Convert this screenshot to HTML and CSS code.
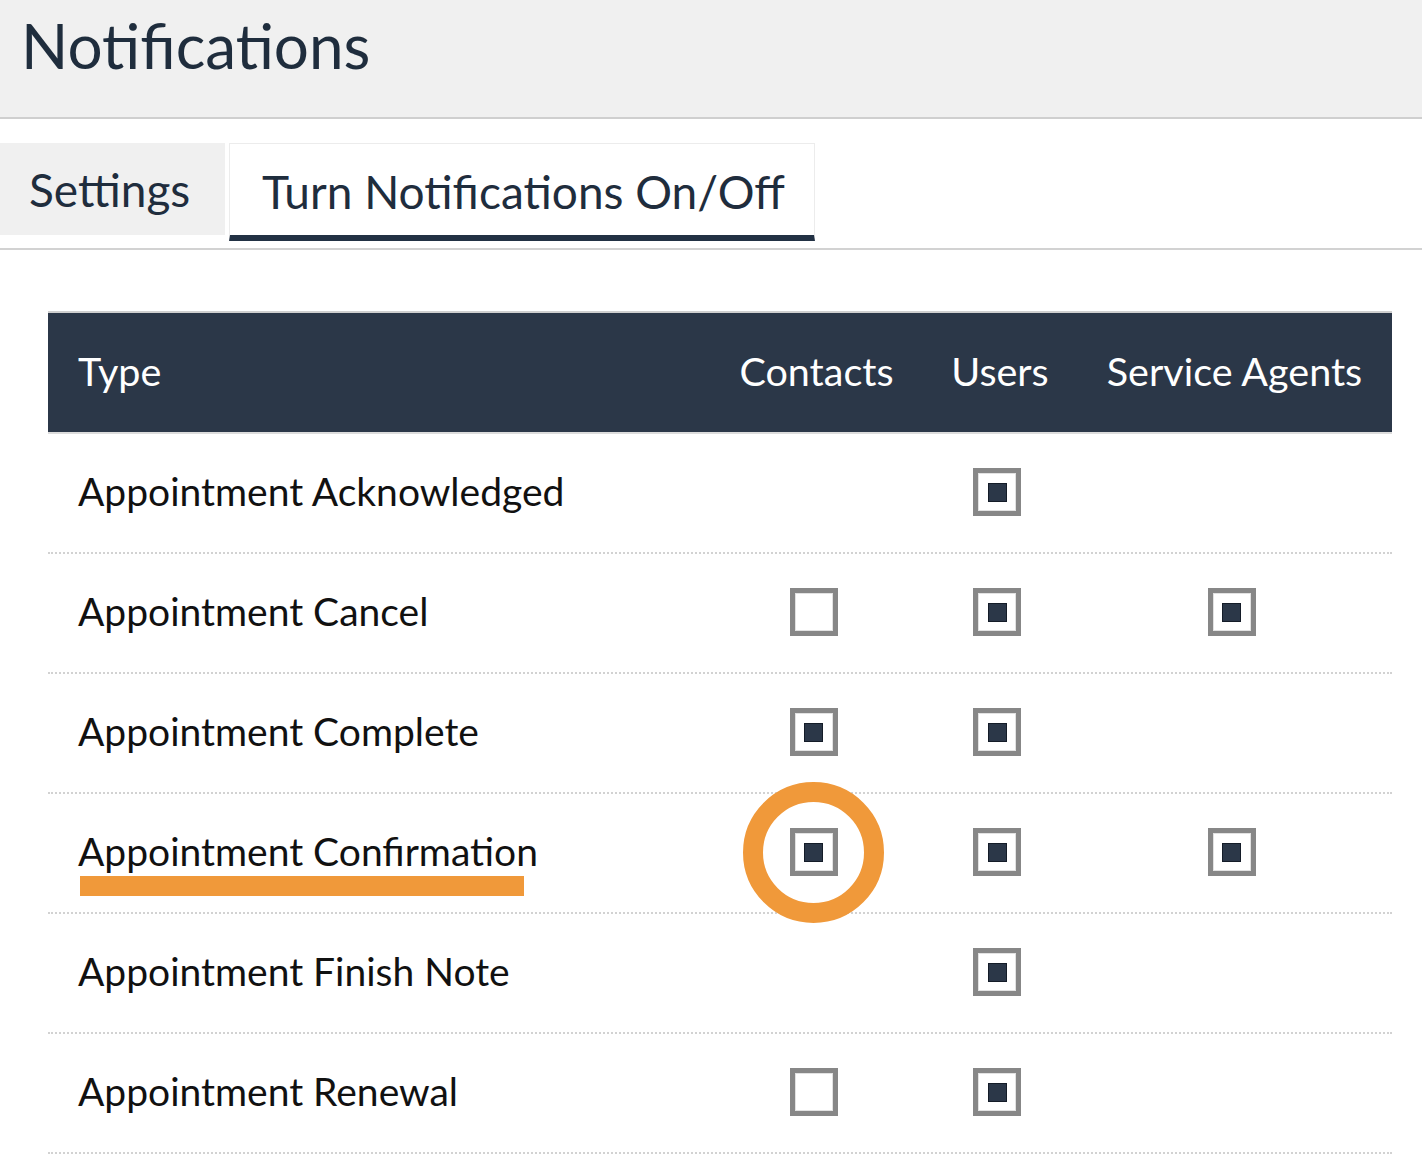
FILE: index.html
```html
<!DOCTYPE html>
<html>
<head>
<meta charset="utf-8">
<link rel="stylesheet" href="styles.css">
</head>
<body>
<header class="page-header">
  <h1 class="title">Notifications</h1>
</header>
<nav class="tabs">
  <div class="tab">Settings</div>
  <div class="tab tab-active">Turn Notifications On/Off</div>
</nav>
<section class="table">
  <div class="row head">
    <div class="cell type">Type</div>
    <div class="cell">Contacts</div>
    <div class="cell">Users</div>
    <div class="cell">Service Agents</div>
  </div>
  <div class="row">
    <div class="cell type">Appointment Acknowledged</div>
    <div class="cell"></div>
    <div class="cell"><span class="cb on"></span></div>
    <div class="cell"></div>
  </div>
  <div class="row">
    <div class="cell type">Appointment Cancel</div>
    <div class="cell"><span class="cb"></span></div>
    <div class="cell"><span class="cb on"></span></div>
    <div class="cell"><span class="cb on"></span></div>
  </div>
  <div class="row">
    <div class="cell type">Appointment Complete</div>
    <div class="cell"><span class="cb on"></span></div>
    <div class="cell"><span class="cb on"></span></div>
    <div class="cell"></div>
  </div>
  <div class="row">
    <div class="cell type"><span class="highlight">Appointment Confirmation</span></div>
    <div class="cell"><span class="cb on circled"></span></div>
    <div class="cell"><span class="cb on"></span></div>
    <div class="cell"><span class="cb on"></span></div>
  </div>
  <div class="row">
    <div class="cell type">Appointment Finish Note</div>
    <div class="cell"></div>
    <div class="cell"><span class="cb on"></span></div>
    <div class="cell"></div>
  </div>
  <div class="row">
    <div class="cell type">Appointment Renewal</div>
    <div class="cell"><span class="cb"></span></div>
    <div class="cell"><span class="cb on"></span></div>
    <div class="cell"></div>
  </div>
</section>
</body>
</html>
```

FILE: styles.css
```css
*, *::before, *::after { box-sizing: border-box; }
body {
  margin: 0;
  background: #fff;
  font-family: "Lato", "Noto Sans", sans-serif;
  color: #111;
}
.page-header {
  background: #f0f0f0;
  height: 119px;
  border-bottom: 2px solid #cfcfcf;
  padding-left: 21px;
  display: flex;
  align-items: flex-start;
}
.title {
  margin: 8px 0 0 0;
  font-weight: 400;
  font-size: 62px;
  line-height: 74px;
  color: #1f2d3d;
}
.tabs {
  margin-top: 24px;
  display: flex;
  align-items: flex-start;
  gap: 4px;
  padding-bottom: 7px;
  border-bottom: 2px solid #d2d2d2;
}
.tab {
  height: 92px;
  display: flex;
  align-items: center;
  font-size: 46px;
  color: #1f2d3d;
}
.tab:first-child {
  width: 225px;
  background: #f0f0f0;
  padding-left: 29px;
}
.tab-active {
  width: 586px;
  height: 98px;
  background: #fff;
  border: 1px solid #ececec;
  border-bottom: 6px solid #223144;
  padding-left: 32px;
  padding-top: 4px;
}
.table {
  margin: 61px 30px 0 48px;
  border-top: 2px solid #cfcfcf;
}
.row {
  display: grid;
  grid-template-columns: 662px 213px 154px 315px;
  height: 120px;
  align-items: center;
  border-bottom: 2px dotted #d2d2d2;
}
.row.head {
  background: #2b3748;
  height: 121px;
  border-bottom: 2px solid #dcdcdc;
  color: #fff;
}
.cell {
  padding: 0 30px;
  font-size: 39px;
  display: flex;
  justify-content: center;
  align-items: center;
  white-space: nowrap;
}
.head .cell {
  font-size: 39.5px;
  padding-bottom: 4px;
}
.cell.type {
  justify-content: flex-start;
  padding-bottom: 4px;
}
.cb {
  position: relative;
  width: 48px;
  height: 48px;
  margin-right: 6px;
  margin-top: -2px;
  border: 5px solid #878787;
  background: #fff;
  box-shadow: inset 0 0 0 1px #e2e2e2;
  display: flex;
  align-items: center;
  justify-content: center;
}
.cb.on::before {
  content: "";
  width: 19px;
  height: 19px;
  background: #2b3748;
  border: 1px solid #141c28;
}
.circled::after {
  content: "";
  position: absolute;
  left: 50%;
  top: 50%;
  width: 141px;
  height: 141px;
  margin: -70px 0 0 -71px;
  border: 20px solid #f0993a;
  border-radius: 50%;
}
.highlight {
  position: relative;
}
.highlight::after {
  content: "";
  position: absolute;
  left: 2px;
  right: 14px;
  top: 100%;
  margin-top: 2px;
  height: 20px;
  background: #f0993a;
}
```
